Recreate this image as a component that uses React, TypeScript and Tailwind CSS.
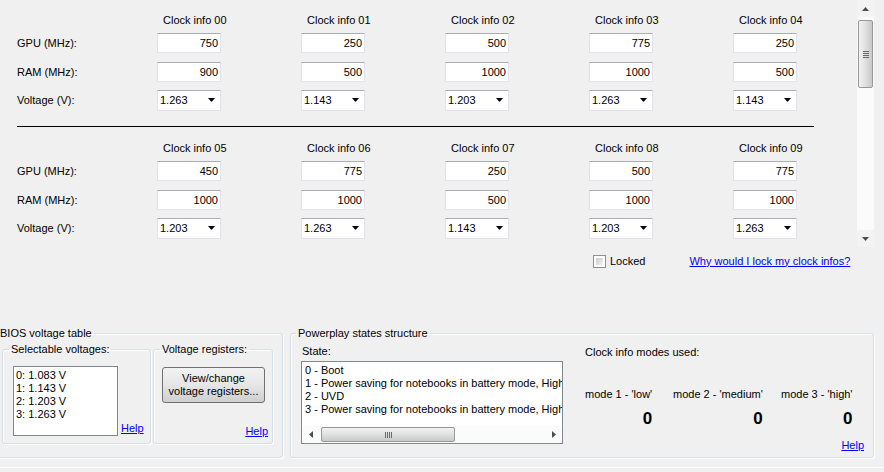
import React from "react";

const font = { fontFamily: '"Liberation Sans", Arial, sans-serif' };

interface ClockSection {
  ids: string[];
  gpu: number[];
  ram: number[];
  volt: string[];
}

const sections: ClockSection[] = [
  {
    ids: ["00", "01", "02", "03", "04"],
    gpu: [750, 250, 500, 775, 250],
    ram: [900, 500, 1000, 1000, 500],
    volt: ["1.263", "1.143", "1.203", "1.263", "1.143"],
  },
  {
    ids: ["05", "06", "07", "08", "09"],
    gpu: [450, 775, 250, 500, 775],
    ram: [1000, 1000, 500, 1000, 1000],
    volt: ["1.203", "1.263", "1.143", "1.203", "1.263"],
  },
];

const voltages = ["0: 1.083 V", "1: 1.143 V", "2: 1.203 V", "3: 1.263 V"];

const states = [
  "0 - Boot",
  "1 - Power saving for notebooks in battery mode, High performance",
  "2 - UVD",
  "3 - Power saving for notebooks in battery mode, High performance",
];

const modes = [
  { label: "mode 1 - 'low'", w: "w-[88px]" },
  { label: "mode 2 - 'medium'", w: "w-[108px]" },
  { label: "mode 3 - 'high'", w: "w-[80px]" },
];

const TextBox = ({ value }: { value: number }) => (
  <div className="w-[64px] h-[20px] bg-white border border-[#e2e3ea] border-t-[#abadb3] flex items-center justify-end pr-[2px] leading-[13px]">
    {value}
  </div>
);

const Arrow = ({ dir, color = "#000" }: { dir: "up" | "down" | "left" | "right"; color?: string }) => {
  const pts = {
    up: "0,4 7,4 3.5,0",
    down: "0,0 7,0 3.5,4",
    left: "4,0 4,7 0,3.5",
    right: "0,0 0,7 4,3.5",
  }[dir];
  const horiz = dir === "left" || dir === "right";
  return (
    <svg width={horiz ? 4 : 7} height={horiz ? 7 : 4} viewBox={horiz ? "0 0 4 7" : "0 0 7 4"}>
      <polygon points={pts} fill={color} />
    </svg>
  );
};

const Combo = ({ value }: { value: string }) => (
  <div className="w-[64px] h-[21px] bg-white border border-[#e2e3ea] border-t-[#abadb3] flex items-center justify-between pl-[2px] pr-[5px] leading-[13px]">
    <span>{value}</span>
    <Arrow dir="down" />
  </div>
);

const Section = ({ s }: { s: ClockSection }) => (
  <div className="flex flex-col">
    <div className="flex h-[14px] leading-[14px]">
      <div className="w-[157px] shrink-0" />
      {s.ids.map(id => (
        <div key={id} className="w-[144px] shrink-0 pl-[6px]">
          Clock info {id}
        </div>
      ))}
    </div>
    <div className="flex h-[32px] items-center">
      <div className="w-[157px] shrink-0 pl-[17px]">GPU (MHz):</div>
      {s.gpu.map((v, i) => (
        <div key={i} className="w-[144px] shrink-0">
          <TextBox value={v} />
        </div>
      ))}
    </div>
    <div className="flex h-[26px] items-center">
      <div className="w-[157px] shrink-0 pl-[17px]">RAM (MHz):</div>
      {s.ram.map((v, i) => (
        <div key={i} className="w-[144px] shrink-0">
          <TextBox value={v} />
        </div>
      ))}
    </div>
    <div className="flex h-[30px] items-center">
      <div className="w-[157px] shrink-0 pl-[17px]">Voltage (V):</div>
      {s.volt.map((v, i) => (
        <div key={i} className="w-[144px] shrink-0">
          <Combo value={v} />
        </div>
      ))}
    </div>
  </div>
);

const Link = ({ children }: { children: React.ReactNode }) => (
  <span className="text-[#0000ff] underline leading-[13px]">{children}</span>
);

const Grip = ({ vertical }: { vertical?: boolean }) => (
  <div className={vertical ? "flex flex-col gap-[1px]" : "flex gap-[1px]"}>
    {[0, 1, 2, 3].map(i => (
      <div key={i} className={vertical ? "w-[6px] h-px bg-[#6a6a6a]" : "w-px h-[6px] bg-[#6a6a6a]"} />
    ))}
  </div>
);

const VScrollbar = () => (
  <div className="w-[17px] h-[247px] flex flex-col bg-[#fbfbfb]">
    <div className="h-[17px] flex items-center justify-center bg-[#f3f3f3]">
      <Arrow dir="up" color="#4d4d4d" />
    </div>
    <div className="flex-1 px-[1px] pt-[3px]">
      <div className="h-[68px] rounded-[2px] border border-[#979797] bg-gradient-to-r from-[#f2f2f2] via-[#e0e0e0] to-[#c9c9c9] flex items-center justify-center">
        <Grip vertical />
      </div>
    </div>
    <div className="h-[17px] flex items-center justify-center bg-[#f3f3f3]">
      <Arrow dir="down" color="#4d4d4d" />
    </div>
  </div>
);

const HScrollbar = () => (
  <div className="h-[17px] flex bg-[#fbfbfb]">
    <div className="w-[17px] flex items-center justify-center">
      <Arrow dir="left" color="#4d4d4d" />
    </div>
    <div className="flex-1 py-[1px] pl-[2px]">
      <div className="w-[134px] h-full rounded-[2px] border border-[#979797] bg-gradient-to-b from-[#f2f2f2] via-[#e0e0e0] to-[#c9c9c9] flex items-center justify-center">
        <Grip />
      </div>
    </div>
    <div className="w-[17px] flex items-center justify-center">
      <Arrow dir="right" color="#4d4d4d" />
    </div>
  </div>
);

const groupCls = "border border-[#d5dfe5] rounded-[3px] shadow-[1px_1px_0_#ffffff,inset_1px_1px_0_#ffffff]";

export default function App() {
  return (
    <div className="w-[884px] h-[472px] bg-[#f0f0f0] text-black text-[11px] overflow-hidden" style={font}>
      {/* clock info panel */}
      <div className="flex h-[247px]">
        <div className="w-[857px] shrink-0 h-[247px] overflow-hidden pt-[13px]">
          <Section s={sections[0]} />
          <div className="ml-[17px] mt-[11px] w-[797px] h-px bg-black" />
          <div className="mt-[14px]">
            <Section s={sections[1]} />
          </div>
        </div>
        <VScrollbar />
      </div>

      <div className="flex items-center h-[28px] pl-[593px]">
        <div className="w-[13px] h-[13px] border border-[#8f8f8f] bg-white p-[2px]">
          <div className="w-full h-full bg-gradient-to-br from-[#cbcbcb] to-[#f4f4f4]" />
        </div>
        <span className="ml-[4px] leading-[13px]">Locked</span>
        <span className="ml-[44px]">
          <Link>Why would I lock my clock infos?</Link>
        </span>
      </div>

      {/* bottom groups */}
      <div className="flex mt-[52px] items-start">
        <fieldset className={`-ml-[8px] shrink-0 w-[291px] h-[131px] ${groupCls}`}>
          <legend className="ml-[5px] px-[2px] leading-[13px]">BIOS voltage table</legend>
          <div className="flex gap-[2px] mt-[3px] pl-[9px]">
            <fieldset className={`w-[149px] h-[101px] ${groupCls}`}>
              <legend className="ml-[6px] px-[2px] leading-[13px]">Selectable voltages:</legend>
              <div className="flex items-end mt-[10px] pl-[10px]">
                <div className="w-[105px] h-[70px] bg-white border border-[#828790] pl-[2px] pt-[2px]">
                  {voltages.map(v => (
                    <div key={v} className="leading-[13px]">
                      {v}
                    </div>
                  ))}
                </div>
                <span className="ml-[3px]">
                  <Link>Help</Link>
                </span>
              </div>
            </fieldset>
            <fieldset className={`w-[120px] h-[101px] ${groupCls}`}>
              <legend className="ml-[6px] px-[2px] leading-[13px]">Voltage registers:</legend>
              <div className="flex flex-col pl-[8px] pr-[4px]">
                <div className="mt-[11px] w-[103px] h-[36px] rounded-[3px] border border-[#707070] bg-gradient-to-b from-[#f2f2f2] via-[#e6e6e6] to-[#cfcfcf] flex flex-col items-center justify-center leading-[13px] text-center">
                  <span>View/change</span>
                  <span>voltage registers...</span>
                </div>
                <div className="mt-[20px] self-end">
                  <Link>Help</Link>
                </div>
              </div>
            </fieldset>
          </div>
        </fieldset>

        <fieldset className={`ml-[7px] shrink-0 w-[584px] h-[131px] ${groupCls}`}>
          <legend className="ml-[5px] px-[2px] leading-[13px]">Powerplay states structure</legend>
          <div className="flex">
            <div className="pl-[10px] pt-[5px] flex flex-col">
              <span className="ml-[1px] leading-[13px]">State:</span>
              <div className="mt-[3px] w-[262px] h-[83px] bg-white border border-[#828790] flex flex-col">
                <div className="flex-1 overflow-hidden pl-[3px] pt-[2px]">
                  {states.map(st => (
                    <div key={st} className="leading-[13px] whitespace-nowrap">
                      {st}
                    </div>
                  ))}
                </div>
                <HScrollbar />
              </div>
            </div>
            <div className="ml-[22px] pt-[6px] flex-1 pr-[9px] flex flex-col">
              <span className="leading-[13px]">Clock info modes used:</span>
              <div className="flex mt-[27px]">
                {modes.map(m => (
                  <div key={m.label} className={m.w}>
                    <div className="inline-flex flex-col items-end">
                      <span className="leading-[13px] whitespace-nowrap">{m.label}</span>
                      <span className="mt-[8px] text-[17px] font-bold leading-[20px]">0</span>
                    </div>
                  </div>
                ))}
              </div>
              <div className="mt-[8px] self-end">
                <Link>Help</Link>
              </div>
            </div>
          </div>
        </fieldset>
      </div>

      <div className="mt-[9px] h-px bg-[#dcdcdc] border-b border-white" />
    </div>
  );
}
